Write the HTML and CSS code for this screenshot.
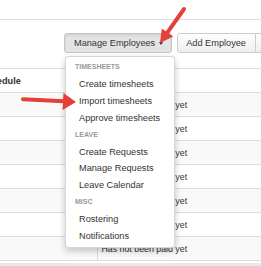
FILE: index.html
```html
<!DOCTYPE html>
<html lang="en">
  <head>
    <meta charset="UTF-8" />
    <title>Timesheets</title>
    <link rel="stylesheet" href="styles.css">
  </head>
  <body>
    <div class="page">
      <div class="topbar"></div>
      <div class="toolbar">
        <div class="dropdown">
          <button class="btn btn-open">Manage Employees <span class="caret"></span></button>
          <ul class="menu">
            <li class="menu-header">Timesheets</li>
            <li><a href="#">Create timesheets</a></li>
            <li><a href="#">Import timesheets</a></li>
            <li><a href="#">Approve timesheets</a></li>
            <li class="menu-header">Leave</li>
            <li><a href="#">Create Requests</a></li>
            <li><a href="#">Manage Requests</a></li>
            <li><a href="#">Leave Calendar</a></li>
            <li class="menu-header">Misc</li>
            <li><a href="#">Rostering</a></li>
            <li><a href="#">Notifications</a></li>
          </ul>
        </div>
        <div class="btn-group">
          <button class="btn">Add Employee</button>
          <button class="btn btn-split"><span class="caret"></span></button>
        </div>
      </div>

      <table class="grid">
        <thead>
          <tr><th>Schedule</th><th>Status</th></tr>
        </thead>
        <tbody>
          <tr><td></td><td>Has not been paid yet</td></tr>
          <tr><td></td><td>Has not been paid yet</td></tr>
          <tr><td></td><td>Has not been paid yet</td></tr>
          <tr><td></td><td>Has not been paid yet</td></tr>
          <tr><td></td><td>Has not been paid yet</td></tr>
          <tr><td></td><td>Has not been paid yet</td></tr>
          <tr><td></td><td>Has not been paid yet</td></tr>
        </tbody>
      </table>
      <div class="footer"></div>

      <!-- annotation arrows -->
      <svg class="arrows" width="261" height="266" viewBox="0 0 261 266">
        <line x1="184" y1="9" x2="167.5" y2="32.4" stroke="#e3403a" stroke-width="4" stroke-linecap="round" />
        <polygon points="160,43 173.2,36.4 161.8,28.4" fill="#e3403a" />
        <line x1="23" y1="99.3" x2="64" y2="101.2" stroke="#e3403a" stroke-width="4" stroke-linecap="round" />
        <polygon points="76,102 63.5,93 62.5,110" fill="#e3403a" />
      </svg>
    </div>
  </body>
</html>
```

FILE: styles.css
```css
* {
  box-sizing: border-box;
  margin: 0;
  padding: 0;
}

body {
  font-family: "Liberation Sans", Arial, sans-serif;
  font-size: 9.2px;
  color: #333;
  background: #ffffff;
  overflow: hidden;
}

.page {
  position: relative;
  width: 261px;
  height: 266px;
  overflow: hidden;
}

.topbar {
  height: 20px;
  border-bottom: 1px solid #dddddd;
}

.toolbar {
  display: flex;
  gap: 5px;
  padding: 13px 0 0 64px;
  height: 48px;
  white-space: nowrap;
}

.dropdown {
  position: relative;
}

.btn {
  font-family: inherit;
  font-size: 9.2px;
  color: #333;
  height: 20px;
  padding: 0 9px;
  border: 1px solid #cccccc;
  border-radius: 3px;
  background: linear-gradient(#ffffff, #eeeeee);
  display: flex;
  align-items: center;
  gap: 4px;
}

.btn-open {
  background: #e4e4e4;
  border-color: #c4c4c4;
  box-shadow: inset 0 2px 3px rgba(0, 0, 0, 0.08);
  padding: 0 8px 0 9px;
}

.btn-group {
  display: flex;
}

.btn-group .btn:first-child {
  border-radius: 3px 0 0 3px;
  padding: 0 9px 0 8px;
}

.btn-split {
  border-left: none;
  border-radius: 0 3px 3px 0;
  padding: 0 6px;
}

.caret {
  display: inline-block;
  width: 0;
  height: 0;
  border-left: 2.5px solid transparent;
  border-right: 2.5px solid transparent;
  border-top: 3px solid #333;
}

.menu {
  position: absolute;
  top: 23px;
  left: 1px;
  width: 110px;
  list-style: none;
  background: #ffffff;
  border: 1px solid rgba(0, 0, 0, 0.16);
  border-radius: 4px;
  box-shadow: 0 3px 7px rgba(0, 0, 0, 0.22);
  padding: 2px 0 2px;
  z-index: 5;
}

.menu li {
  line-height: 16.9px;
}

.menu a {
  display: block;
  padding-left: 13px;
  color: #333;
  text-decoration: none;
}

.menu-header {
  padding-left: 9px;
  font-size: 7px;
  font-weight: bold;
  text-transform: uppercase;
  color: #9a9a9a;
}

.grid {
  width: calc(100% + 27px);
  margin-left: -27px;
  border-collapse: collapse;
}

.grid th,
.grid td {
  height: 24px;
  padding: 0 4px;
  text-align: left;
  border-top: 1px solid #dddddd;
  white-space: nowrap;
  font-size: 8.8px;
}

.grid th {
  font-weight: bold;
  font-size: 9.2px;
}

.grid th:first-child,
.grid td:first-child {
  width: 124px;
  padding-left: 7px;
  border-right: 1px solid #dddddd;
}

.grid tbody tr:nth-child(odd) {
  background: #f9f9f9;
}

.grid tbody tr:last-child td {
  border-bottom: 1px solid #dddddd;
}

.footer {
  margin-top: 2px;
  height: 10px;
  background: #e8e8e8;
}

.arrows {
  position: absolute;
  top: 0;
  left: 0;
  pointer-events: none;
  z-index: 10;
}
```
